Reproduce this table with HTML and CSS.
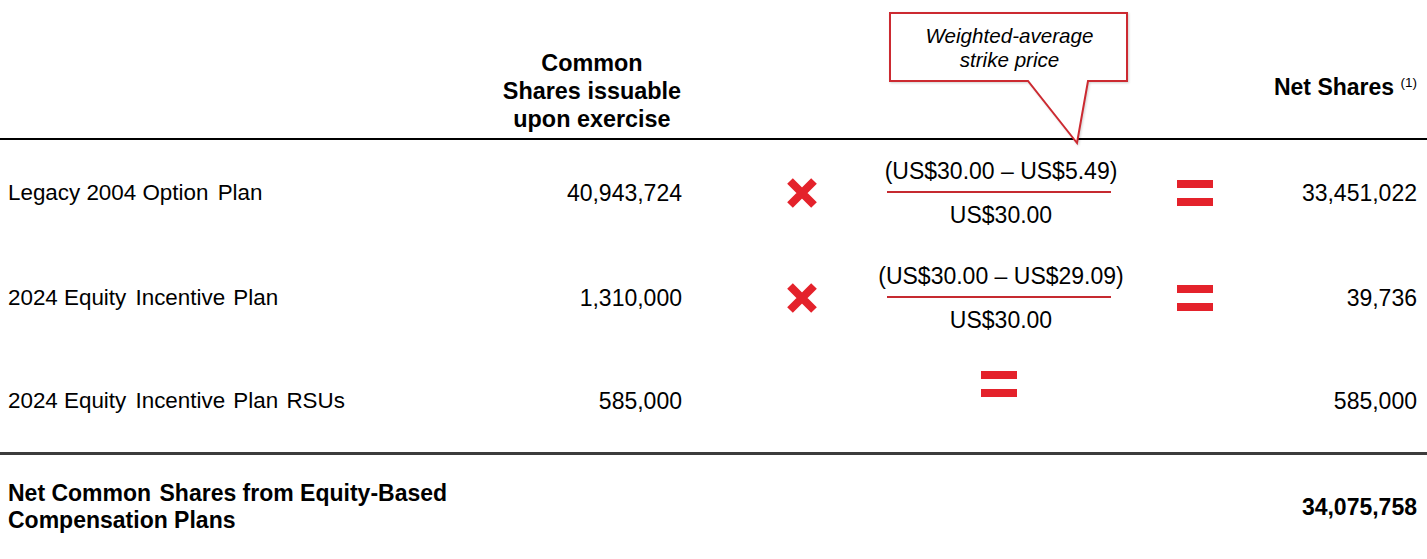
FILE: index.html
```html
<!DOCTYPE html>
<html lang="en">
<head>
<meta charset="utf-8">
<title>Net Common Shares from Equity-Based Compensation Plans</title>
<link rel="stylesheet" href="styles.css">
</head>
<body>
<div class="sheet">
  <header class="head">
    <div class="grid head-grid">
      <div class="cell"></div>
      <div class="colhead">Common<br>Shares issuable<br>upon exercise</div>
      <div class="cell"></div>
      <div class="cell"></div>
      <div class="cell"></div>
      <div class="cell"></div>
      <div class="nethead">Net Shares <sup class="note">(1)</sup></div>
    </div>
    <div class="callout">
      <svg class="callout-shape" width="242" height="135" viewBox="0 0 242 135" aria-hidden="true">
        <path d="M1 1 H238 V69 H199 L188 131 L139 69 H1 Z" fill="#ffffff" stroke="#cc2a31" stroke-width="2" stroke-linejoin="miter"/>
      </svg>
      <div class="callout-text">Weighted-average<br>strike price</div>
    </div>
  </header>

  <div class="grid row">
    <div class="label">Legacy 2004 Option <span class="gap">Plan</span></div>
    <div class="num">40,943,724</div>
    <div class="cell"></div>
    <div class="op"><svg class="times" width="30" height="30" viewBox="0 0 30 30" aria-hidden="true"><path d="M3 3 L27 27 M27 3 L3 27" stroke="#e4222b" stroke-width="8" stroke-linecap="butt"/></svg></div>
    <div class="frac">
      <div class="frac-top">(US$30.00 – US$5.49)</div>
      <div class="frac-bar"></div>
      <div class="frac-bot">US$30.00</div>
    </div>
    <div class="op"><div class="equals"><span></span><span></span></div></div>
    <div class="num">33,451,022</div>
  </div>

  <div class="grid row">
    <div class="label">2024 Equity <span class="gap">Incentive</span> <span class="gap-sm">Plan</span></div>
    <div class="num">1,310,000</div>
    <div class="cell"></div>
    <div class="op"><svg class="times" width="30" height="30" viewBox="0 0 30 30" aria-hidden="true"><path d="M3 3 L27 27 M27 3 L3 27" stroke="#e4222b" stroke-width="8" stroke-linecap="butt"/></svg></div>
    <div class="frac">
      <div class="frac-top">(US$30.00 – US$29.09)</div>
      <div class="frac-bar"></div>
      <div class="frac-bot">US$30.00</div>
    </div>
    <div class="op"><div class="equals"><span></span><span></span></div></div>
    <div class="num">39,736</div>
  </div>

  <div class="grid row row-last">
    <div class="label">2024 Equity <span class="gap">Incentive</span> <span class="gap-sm">Plan</span> <span class="gap-sm">RSUs</span></div>
    <div class="num">585,000</div>
    <div class="cell"></div>
    <div class="cell"></div>
    <div class="op op-high"><div class="equals"><span></span><span></span></div></div>
    <div class="cell"></div>
    <div class="num">585,000</div>
  </div>

  <div class="grid total">
    <div class="total-label">Net Common <span class="gap-sm">Shares</span> from Equity-Based<br>Compensation Plans</div>
    <div class="cell"></div>
    <div class="cell"></div>
    <div class="cell"></div>
    <div class="cell"></div>
    <div class="cell"></div>
    <div class="num total-num">34,075,758</div>
  </div>
</div>
</body>
</html>
```

FILE: styles.css
```css
* {
  box-sizing: border-box;
}

html, body {
  margin: 0;
  padding: 0;
  background: #ffffff;
}

body {
  font-family: "Liberation Sans", Arial, sans-serif;
  color: #000000;
  font-size: 23px;
}

.sheet {
  width: 1427px;
  height: 559px;
  overflow: hidden;
}

.grid {
  display: grid;
  grid-template-columns: 474px 200px 80px 80px 314px 78px 1fr;
  padding: 0 10px 0 8px;
}

.head {
  position: relative;
  height: 140px;
  border-bottom: 2px solid #000000;
}

.head-grid {
  height: 138px;
}

.colhead {
  grid-column: 2;
  justify-self: end;
  align-self: end;
  text-align: center;
  font-weight: bold;
  font-size: 23.4px;
  line-height: 28px;
  padding-bottom: 5px;
  margin-right: 1px;
}

.nethead {
  justify-self: end;
  align-self: end;
  font-weight: bold;
  line-height: 28px;
  padding-bottom: 37px;
  white-space: nowrap;
}

.note {
  font-weight: normal;
  font-size: 13.5px;
  vertical-align: 8px;
  line-height: 0;
}

.callout {
  position: absolute;
  left: 889px;
  top: 12px;
  width: 242px;
  height: 135px;
}

.callout-shape {
  display: block;
  filter: drop-shadow(1px 1px 1px rgba(0, 0, 0, 0.18));
}

.callout-text {
  position: absolute;
  left: 1px;
  top: 1px;
  width: 237px;
  height: 68px;
  display: flex;
  align-items: center;
  justify-content: center;
  text-align: center;
  font-style: italic;
  font-size: 20.6px;
  line-height: 24px;
  padding-top: 2px;
  padding-left: 2px;
}

.row {
  height: 105px;
  align-items: center;
}

.row-last {
  height: 105px;
  border-bottom: 3px solid #3c3c3c;
}

.label {
  font-size: 22.4px;
  line-height: 28px;
  white-space: nowrap;
}

.gap {
  margin-left: 3px;
}

.gap-sm {
  margin-left: 2px;
}

.num {
  justify-self: end;
  line-height: 28px;
  white-space: nowrap;
}

.op {
  display: flex;
  justify-content: center;
  align-items: center;
}

.op-high {
  align-self: start;
  margin-top: 21px;
}

.times {
  display: block;
}

.equals {
  display: flex;
  flex-direction: column;
  gap: 10px;
  width: 36px;
}

.equals span {
  display: block;
  height: 8px;
  background: #e4222b;
}

.frac {
  display: flex;
  flex-direction: column;
  align-items: center;
}

.frac-top,
.frac-bot {
  line-height: 24px;
  white-space: nowrap;
  padding-left: 4px;
}

.frac-bar {
  width: 224px;
  height: 2px;
  background: #c62a30;
  margin: 8px 0 10px;
}

.total {
  height: 104px;
  align-items: center;
}

.total-label {
  font-weight: bold;
  line-height: 27px;
  white-space: nowrap;
}

.total-num {
  font-weight: bold;
}
```
